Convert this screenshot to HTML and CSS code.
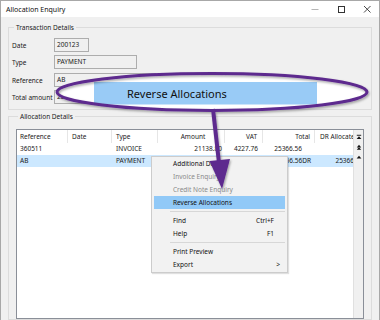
FILE: index.html
```html
<!DOCTYPE html>
<html>
<head>
<meta charset="utf-8">
<link rel="stylesheet" href="styles.css">
</head>
<body>
<div class="window">
  <div class="titlebar">
    <span class="title">Allocation Enquiry</span>
    <div class="controls">
      <svg class="ctl" width="10" height="10" viewBox="0 0 10 10"><line x1="1.5" y1="5.5" x2="8.5" y2="5.5" stroke="#b5b5b5" stroke-width="1"/></svg>
      <svg class="ctl" width="10" height="10" viewBox="0 0 10 10"><rect x="2.5" y="2.5" width="6" height="6" fill="none" stroke="#333" stroke-width="1"/></svg>
      <svg class="ctl" width="10" height="10" viewBox="0 0 10 10"><path d="M2 2 L8.5 8.5 M8.5 2 L2 8.5" stroke="#333" stroke-width="0.9"/></svg>
    </div>
  </div>
  <div class="client">
    <fieldset class="group trans">
      <legend>Transaction Details</legend>
      <div class="field"><span class="lbl">Date</span><div class="box w-date">200123</div></div>
      <div class="field"><span class="lbl">Type</span><div class="box w-type">PAYMENT</div></div>
      <div class="field ref"><span class="lbl">Reference</span><div class="box w-ref">AB</div></div>
      <div class="field"><span class="lbl">Total amount</span><div class="box w-tot">25366.56</div></div>
    </fieldset>
    <fieldset class="group alloc">
      <legend>Allocation Details</legend>
      <div class="list">
        <div class="gridwrap">
          <div class="grid">
            <div class="hd">Reference</div>
            <div class="hd">Date</div>
            <div class="hd">Type</div>
            <div class="hd c-amt">Amount</div>
            <div class="hd c-vat">VAT</div>
            <div class="hd c-tot">Total</div>
            <div class="hd c-dr">DR Allocated</div>

            <div class="cell">360511</div>
            <div class="cell d"></div>
            <div class="cell t">INVOICE</div>
            <div class="cell n-amt">21138.80</div>
            <div class="cell n-vat">4227.76</div>
            <div class="cell n-tot nodr">25366.56</div>
            <div class="cell n-dr"></div>

            <div class="cell sel">AB</div>
            <div class="cell sel d"></div>
            <div class="cell sel t">PAYMENT</div>
            <div class="cell sel n-amt">25366.56</div>
            <div class="cell sel n-vat"></div>
            <div class="cell sel n-tot">25366.56DR</div>
            <div class="cell sel n-dr">25366.56DR</div>
          </div>
        </div>
        <div class="scrollbar">
          <div class="sbtn"><svg width="6" height="6" viewBox="0 0 6 6"><rect x="0.8" y="0.8" width="4.4" height="0.9" fill="#111"/><path d="M0.6 5 L3 2.2 L5.4 5 Z" fill="#111"/></svg></div>
          <div class="sbtn"><svg width="6" height="6" viewBox="0 0 6 6"><path d="M0.8 3.4 L3 0.8 L5.2 3.4 Z" fill="#111"/><path d="M0.8 5.8 L3 3.2 L5.2 5.8 Z" fill="#111"/></svg></div>
          <div class="sbtn"><svg width="6" height="6" viewBox="0 0 6 6"><path d="M0.6 4.6 L3 1.8 L5.4 4.6 Z" fill="#111"/></svg></div>
        </div>
      </div>
    </fieldset>
  </div>

  <div class="menu">
    <div class="mi">Additional Details</div>
    <div class="mi dis">Invoice Enquiry</div>
    <div class="mi dis">Credit Note Enquiry</div>
    <div class="mi hot">Reverse Allocations</div>
    <div class="msep"></div>
    <div class="mi"><span>Find</span><span>Ctrl+F</span></div>
    <div class="mi"><span>Help</span><span>F1</span></div>
    <div class="msep"></div>
    <div class="mi">Print Preview</div>
    <div class="mi"><span>Export</span><span class="sub">&gt;</span></div>
  </div>

  <svg class="callout" width="380" height="320" viewBox="0 0 380 320">
    <defs>
      <filter id="sh" x="-10%" y="-10%" width="120%" height="130%">
        <feDropShadow dx="1" dy="1.5" stdDeviation="0.8" flood-color="#000" flood-opacity="0.35"/>
      </filter>
    </defs>
    <ellipse cx="212" cy="92" rx="155" ry="18.5" fill="#ffffff"/>
    <rect x="94" y="82" width="223" height="22.5" fill="#99cbf6"/>
    <text x="127" y="97.5" class="bigtext">Reverse Allocations</text>
    <g filter="url(#sh)">
      <ellipse cx="212" cy="92" rx="155" ry="18.5" fill="none" stroke="#5d2a8e" stroke-width="3"/>
      <line x1="213" y1="109" x2="219" y2="163" stroke="#5d2a8e" stroke-width="4"/>
      <path d="M209.5 161 L230 159 L222 189 Z" fill="#5d2a8e"/>
    </g>
  </svg>
</div>
</body>
</html>
```

FILE: styles.css
```css
* { box-sizing: border-box; }
html, body { margin: 0; padding: 0; }
body {
  width: 380px;
  height: 320px;
  overflow: hidden;
  background: #ffffff;
  font-family: "Noto Sans", "Open Sans", sans-serif;
  font-size: 6.5px;
  color: #1a1a1a;
}
.window {
  position: relative;
  width: 380px;
  height: 320px;
  overflow: hidden;
  border: 1px solid #a8a8a8;
  border-bottom: none;
  background: #f0f0f0;
  display: flex;
  flex-direction: column;
}
.titlebar {
  height: 16px;
  flex: none;
  background: #ffffff;
  display: flex;
  align-items: center;
  justify-content: space-between;
  padding-left: 5px;
}
.title { font-size: 7px; color: #111; }
.controls { display: flex; align-items: center; height: 16px; }
.ctl { display: block; margin-left: 16px; }
.controls .ctl:last-child { margin-right: 7px; }
.client {
  flex: 1;
  padding: 6px 7px 0 7px;
  display: flex;
  flex-direction: column;
}
.group {
  margin: 0;
  border: 1px solid #dcdcdc;
  min-width: 0;
}
.group legend {
  padding: 0 2px;
  margin-left: 2px;
  line-height: 9px;
  font-size: 6.5px;
}
.trans {
  padding: 6px 0 5px 3px;
  display: flex;
  flex-direction: column;
  gap: 3px;
}
.field { display: flex; align-items: center; height: 14px; }
.field.ref { margin-top: 1px; }
.lbl { width: 42px; white-space: nowrap; }
.box {
  height: 14px;
  border: 1px solid #adadad;
  background: #f0f0f0;
  padding-left: 2px;
  line-height: 12px;
}
.w-date { width: 35px; }
.w-type { width: 83px; }
.w-ref { width: 102px; }
.w-tot { width: 83px; }
.alloc {
  margin-top: 2px;
  flex: 1;
  padding: 8px 7px 0 7px;
  display: flex;
  flex-direction: column;
}
.list {
  flex: 1;
  border: 1px solid #8a8f98;
  background: #ffffff;
  display: flex;
}
.gridwrap { flex: 1; overflow: hidden; }
.grid {
  display: grid;
  grid-template-columns: 51px 44px 46px 67px 38px 52px 60px;
  grid-template-rows: 13px 12px 12px;
  width: 358px;
}
.hd {
  line-height: 13px;
  border-right: 1px solid #e6e6e6;
  padding-left: 3px;
  white-space: nowrap;
  overflow: hidden;
}
.hd:nth-child(2), .hd:nth-child(3) { padding-left: 4px; }
.hd.c-amt { text-align: center; padding-left: 4px; }
.hd.c-vat { text-align: right; padding-right: 5px; }
.hd.c-tot { text-align: right; padding-right: 4px; }
.hd.c-dr { padding-left: 5px; border-right: none; }
.cell {
  line-height: 12px;
  padding-left: 3px;
  white-space: nowrap;
  overflow: hidden;
}
.cell.d, .cell.t { padding-left: 4px; }
.n-amt { text-align: right; padding-right: 3px; }
.n-vat { text-align: right; padding-right: 5px; }
.n-tot { text-align: right; padding-right: 4px; }
.n-tot.nodr { padding-right: 13px; }
.n-dr { text-align: right; padding-right: 3px; }
.sel { background: #cce8ff; }
.scrollbar {
  width: 10px;
  flex: none;
  background: #f0f0f0;
  border-left: 1px solid #e0e0e0;
  display: flex;
  flex-direction: column;
  align-items: center;
  padding-top: 3px;
  gap: 3px;
}
.sbtn {
  width: 8px;
  height: 7px;
  display: flex;
  align-items: center;
  justify-content: center;
}
.sbtn svg { display: block; }
.menu {
  position: absolute;
  left: 150px;
  top: 155px;
  width: 137px;
  background: #f2f2f2;
  border: 1px solid #cccccc;
  box-shadow: 1px 1px 1px rgba(0,0,0,0.12);
  padding-bottom: 1px;
  color: #111;
}
.mi {
  height: 13px;
  line-height: 13px;
  margin: 0 2px;
  padding: 0 11px 0 19px;
  display: flex;
  justify-content: space-between;
  white-space: nowrap;
}
.mi.dis { color: #8a8a8a; }
.mi.hot { background: #91c9f7; }
.mi .sub { margin-right: -6px; }
.msep {
  height: 5px;
  margin: 0 2px 0 18px;
  display: flex;
  align-items: center;
}
.msep::before {
  content: "";
  display: block;
  width: 100%;
  height: 1px;
  background: #d7d7d7;
}
.callout {
  position: absolute;
  left: -1px;
  top: -1px;
  pointer-events: none;
}
.bigtext {
  font-family: "Noto Sans", "Open Sans", sans-serif;
  font-size: 11px;
  fill: #111;
}
```
